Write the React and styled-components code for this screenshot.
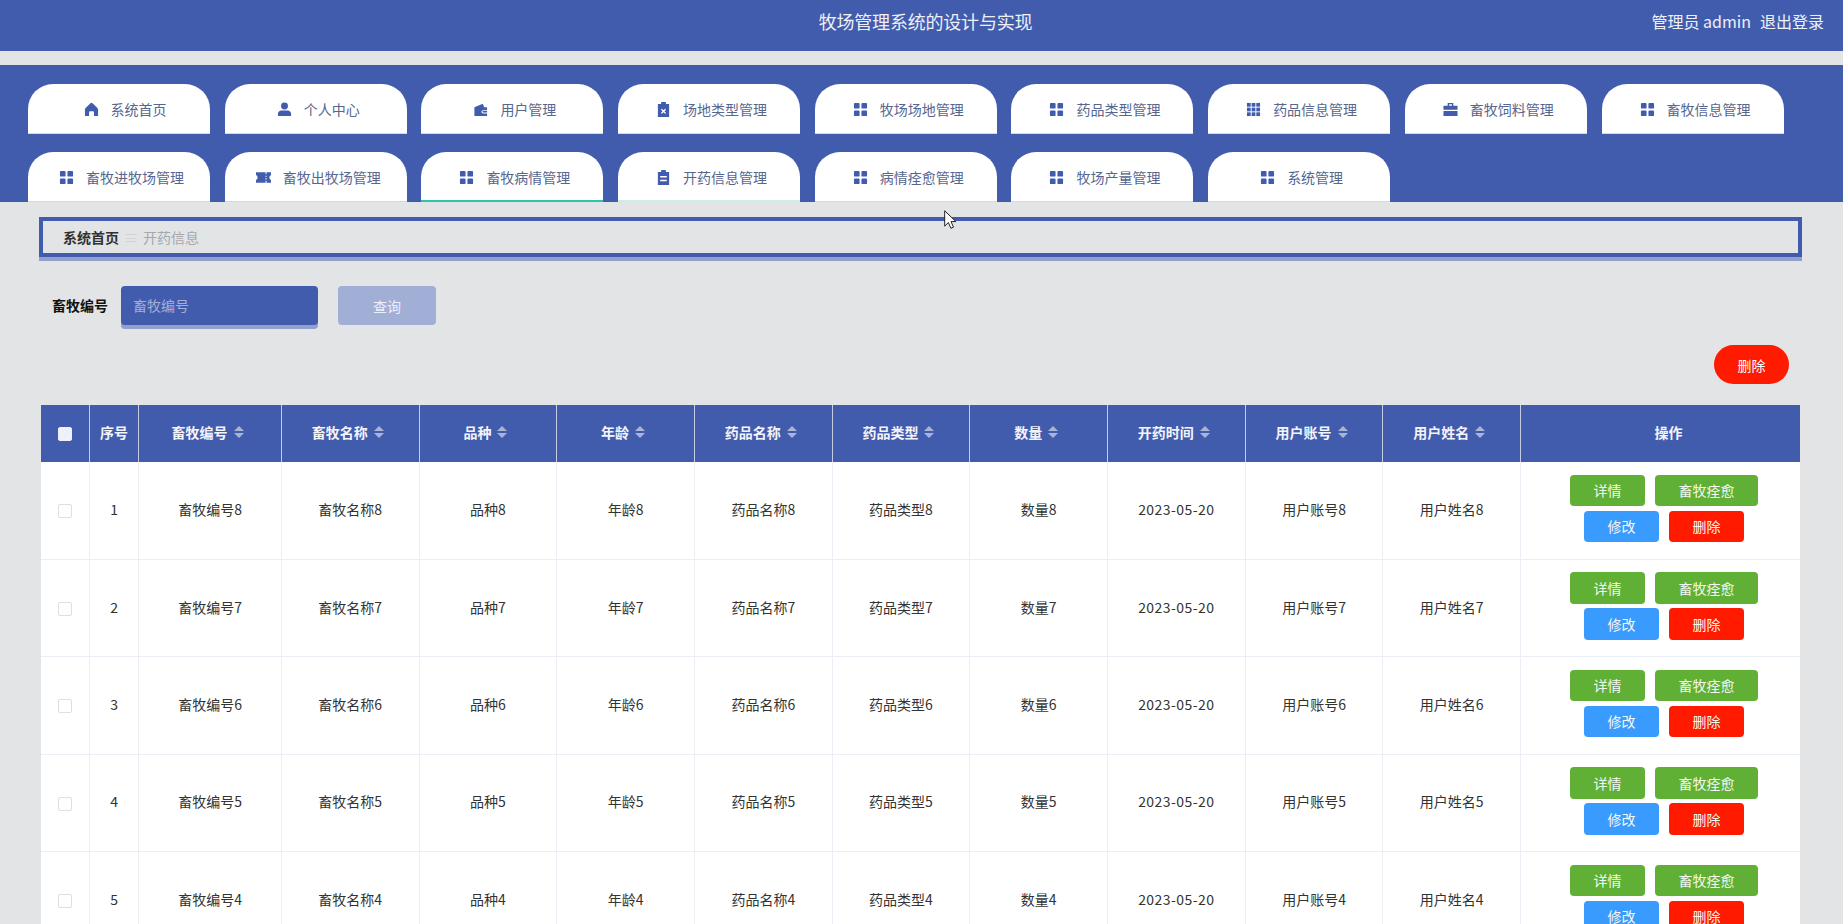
import styled, { createGlobalStyle } from 'styled-components';

const BLUE = '#425cad';
const PAGE = '#e2e4e6';

const GlobalStyle = createGlobalStyle`
  html, body {
    margin: 0;
    padding: 0;
    height: 100%;
    overflow: hidden;
    background: ${PAGE};
  }
  * {
    box-sizing: border-box;
  }
  body {
    font-family: "Noto Sans CJK SC", "Noto Sans", sans-serif;
    font-size: 14px;
    color: #333;
  }
`;

const Icons = {
  home: (
    <path d="M8 .8c.4 0 .8.2 1.100.5l5.200 5c.4.4.7.9.7 1.500V15h-4.400v-4.200c0-.6-.4-1-1-1H6.400c-.6 0-1 .4-1 1V15H1V7.800c0-.6.3-1.100.7-1.500l5.200-5C7.200 1 7.600.8 8 .8z" />
  ),
  user: (
    <>
      <circle cx="8" cy="4.300" r="3.700" />
      <path d="M1 15v-2.500C1 10.500 2.700 9 4.600 9h6.800c1.900 0 3.600 1.500 3.600 3.500V15H1z" />
    </>
  ),
  wallet: (
    <path
      fillRule="evenodd"
      d="M1.500 5.500 10.500 1.800l1.300 3.700H15v3.300h-4.300a1.700 1.700 0 0 0 0 3.400H15V15H1.500V5.500zM10.800 9.700h4.200v1.600h-4.200a.8.800 0 0 1 0-1.600z"
    />
  ),
  clipX: (
    <path
      fillRule="evenodd"
      d="M5.500 0h5v2h3.500v14H2V2h3.500V0zM6.300 7.200 5.300 8.200 7 9.900l-1.700 1.700 1 1L8 10.900l1.700 1.700 1-1L9 9.900l1.700-1.700-1-1L8 8.900 6.300 7.200z"
    />
  ),
  clip: (
    <path
      fillRule="evenodd"
      d="M5.500 0h5v2h3.500v14H2V2h3.500V0zM4.500 6.500v1.500h7V6.500h-7zm0 4v1.500h7v-1.500h-7z"
    />
  ),
  grid: (
    <>
      <rect x="1" y="1" width="6" height="6" rx="1" />
      <rect x="9" y="1" width="6" height="6" rx="1" />
      <rect x="1" y="9" width="6" height="6" rx="1" />
      <rect x="9" y="9" width="6" height="6" rx="1" />
    </>
  ),
  grid9: (
    <>
      {[1, 6, 11].flatMap((y) =>
        [1, 6, 11].map((x) => (
          <rect key={`${x}-${y}`} x={x} y={y} width="4" height="4" />
        ))
      )}
    </>
  ),
  ticket: (
    <path
      fillRule="evenodd"
      d="M0 2.500h10.200v2h1v-2H16v2.800c-1.100.5-1.700 1.500-1.700 2.700s.6 2.200 1.700 2.700v2.800h-4.800v-2h-1v2H0v-2.800c1.100-.5 1.700-1.500 1.700-2.700S1.100 5.800 0 5.300V2.500zM10.200 6v1.500h1V6h-1zm0 2.500V10h1V8.500h-1z"
    />
  ),
  case: (
    <path
      fillRule="evenodd"
      d="M5 1h6v3h4.500v4.300H.5V4H5V1zm1.500 1.400V4h3V2.400h-3zM.5 9.600h15V15H.5V9.600z"
    />
  ),
};

const navItems = [
  { name: '系统首页', icon: 'home', shift: 12 },
  { name: '个人中心', icon: 'user' },
  { name: '用户管理', icon: 'wallet' },
  { name: '场地类型管理', icon: 'clipX' },
  { name: '牧场场地管理', icon: 'grid' },
  { name: '药品类型管理', icon: 'grid' },
  { name: '药品信息管理', icon: 'grid9' },
  { name: '畜牧饲料管理', icon: 'case' },
  { name: '畜牧信息管理', icon: 'grid' },
  { name: '畜牧进牧场管理', icon: 'grid' },
  { name: '畜牧出牧场管理', icon: 'ticket' },
  { name: '畜牧病情管理', icon: 'grid', underline: '#2fc3ad' },
  { name: '开药信息管理', icon: 'clip', underline: '#c9efe8' },
  { name: '病情痊愈管理', icon: 'grid' },
  { name: '牧场产量管理', icon: 'grid' },
  { name: '系统管理', icon: 'grid' },
];

const columns = [
  { title: '畜牧编号', key: '畜牧编号', width: 142.6 },
  { title: '畜牧名称', key: '畜牧名称', width: 137.7 },
  { title: '品种', key: '品种', width: 137.7 },
  { title: '年龄', key: '年龄', width: 137.7 },
  { title: '药品名称', key: '药品名称', width: 137.7 },
  { title: '药品类型', key: '药品类型', width: 137.7 },
  { title: '数量', key: '数量', width: 137.7 },
  { title: '开药时间', key: 'date', width: 137.7 },
  { title: '用户账号', key: '用户账号', width: 137.7 },
  { title: '用户姓名', key: '用户姓名', width: 137.7 },
];

const rows = [8, 7, 6, 5, 4];

const App = () => {
  return (
    <Page>
      <GlobalStyle />
      <TopBar>
        <Title>牧场管理系统的设计与实现</Title>
        <UserBox>
          <span>管理员 admin</span>
          <span>退出登录</span>
        </UserBox>
      </TopBar>

      <Nav>
        {navItems.map((item) => (
          <Tab key={item.name} $underline={item.underline} $shift={item.shift}>
            <TabIcon viewBox="0 0 16 16">{Icons[item.icon]}</TabIcon>
            {item.name}
          </Tab>
        ))}
      </Nav>

      <Breadcrumb>
        <CrumbLink>系统首页</CrumbLink>
        <CrumbSep>≡</CrumbSep>
        <CrumbCurrent>开药信息</CrumbCurrent>
      </Breadcrumb>

      <SearchRow>
        <SearchLabel>畜牧编号</SearchLabel>
        <SearchInput placeholder="畜牧编号" />
        <SearchButton>查询</SearchButton>
      </SearchRow>

      <ToolRow>
        <PillButton>删除</PillButton>
      </ToolRow>

      <Table>
        <colgroup>
          <col style={{ width: 48.4 }} />
          <col style={{ width: 49.4 }} />
          {columns.map((col) => (
            <col key={col.key} style={{ width: col.width }} />
          ))}
          <col style={{ width: 279.3 }} />
        </colgroup>
        <thead>
          <tr>
            <Th>
              <CheckBox $head />
            </Th>
            <Th>序号</Th>
            {columns.map((col) => (
              <Th key={col.key}>
                <SortLabel>
                  {col.title}
                  <SortCaret />
                </SortLabel>
              </Th>
            ))}
            <ActionHead>操作</ActionHead>
          </tr>
        </thead>
        <tbody>
          {rows.map((n, i) => (
            <tr key={n}>
              <Td>
                <CheckBox />
              </Td>
              <Td>{i + 1}</Td>
              {columns.map((col) => (
                <Td key={col.key}>
                  {col.key === 'date' ? <DateText>2023-05-20</DateText> : `${col.key}${n}`}
                </Td>
              ))}
              <ActionCell>
                <Actions>
                  <ActionButton $color="#5fb035">详情</ActionButton>
                  <ActionButton $color="#5fb035">畜牧痊愈</ActionButton>
                  <ActionButton $color="#3a9bff">修改</ActionButton>
                  <ActionButton $color="#ff1a00">删除</ActionButton>
                </Actions>
              </ActionCell>
            </tr>
          ))}
        </tbody>
      </Table>

      <Cursor viewBox="0 0 12 19">
        <path
          d="M.7.8v15.300l3.700-3.500 2.500 5.700 2.600-1.100-2.500-5.600h4.900z"
          fill="#fff"
          stroke="#222"
          strokeWidth="1"
        />
      </Cursor>
    </Page>
  );
};

export default App;

const Page = styled.div`
  position: relative;
  height: 924px;
  overflow: hidden;
`;

const TopBar = styled.header`
  position: relative;
  display: flex;
  justify-content: flex-end;
  height: 51px;
  padding: 8px 19px 0 0;
  background: ${BLUE};
  color: #eef0f6;
`;

const Title = styled.div`
  position: absolute;
  left: 0;
  right: 0;
  top: 7px;
  padding-left: 8px;
  text-align: center;
  font-size: 18px;
  letter-spacing: -0.2px;
  line-height: 28px;
`;

const UserBox = styled.div`
  position: relative;
  display: flex;
  gap: 9px;
  font-size: 16px;
  line-height: 26px;
`;

const Nav = styled.nav`
  display: flex;
  flex-wrap: wrap;
  gap: 18px 14.7px;
  height: 137px;
  margin-top: 14px;
  padding: 19px 0 0 28px;
  background: ${BLUE};
`;

const Tab = styled.div`
  display: flex;
  align-items: center;
  justify-content: center;
  gap: 12px;
  width: 182px;
  height: 50px;
  padding-left: ${({ $shift }) => $shift || 5}px;
  border-radius: 25px 25px 0 0;
  box-shadow: ${({ $underline }) =>
    $underline ? `inset 0 -2px 0 ${$underline}` : 'inset 0 -1px 0 #d5d9e6'};
  background: #fff;
  color: #56668f;
  font-size: 14px;
`;

const TabIcon = styled.svg`
  flex: none;
  width: 15px;
  height: 15px;
  fill: ${BLUE};
`;

const Breadcrumb = styled.div`
  display: flex;
  align-items: center;
  height: 40px;
  margin: 15px 41px 0 39px;
  padding-left: 20px;
  border: 4px solid ${BLUE};
  box-shadow: 0 4px 0 rgba(66, 92, 173, 0.5);
  font-size: 14px;
`;

const CrumbLink = styled.span`
  font-weight: 700;
  color: #303133;
`;

const CrumbSep = styled.span`
  width: 24px;
  text-align: center;
  color: #cfd2d6;
`;

const CrumbCurrent = styled.span`
  color: #a5a8ad;
`;

const SearchRow = styled.div`
  display: flex;
  align-items: center;
  height: 39px;
  margin: 29px 0 0 52px;
`;

const SearchLabel = styled.label`
  width: 69px;
  padding-bottom: 2px;
  font-weight: 700;
  color: #111;
`;

const SearchInput = styled.input`
  width: 197px;
  height: 39px;
  padding: 0 12px 2px;
  border: 0;
  border-radius: 4px;
  outline: none;
  background: ${BLUE};
  box-shadow: 0 4px 0 rgba(66, 92, 173, 0.5);
  font: inherit;
  color: #fff;
  &::placeholder {
    color: #a3b0d6;
    opacity: 1;
  }
`;

const SearchButton = styled.button`
  width: 98px;
  height: 39px;
  margin-left: 20px;
  border: 0;
  border-radius: 4px;
  background: #a1aed6;
  color: #eef0f8;
  font: inherit;
`;

const ToolRow = styled.div`
  display: flex;
  justify-content: flex-end;
  margin: 20px 54px 0 0;
`;

const PillButton = styled.button`
  width: 75px;
  height: 39px;
  border: 0;
  border-radius: 20px;
  background: #ff1a00;
  color: #fff;
  font: inherit;
`;

const Table = styled.table`
  width: 1759px;
  margin: 21px 0 0 41px;
  table-layout: fixed;
  border-collapse: collapse;
  background: #fff;
`;

const Th = styled.th`
  height: 57px;
  padding: 0 0 3px;
  border-right: 1px solid #c6cde3;
  background: ${BLUE};
  color: #f2f4fa;
  font-size: 14px;
  font-weight: 700;
  text-align: center;
`;

const ActionHead = styled(Th)`
  padding-left: 16px;
  border-right: 0;
`;

const SortLabel = styled.span`
  display: inline-flex;
  align-items: center;
  gap: 6px;
  padding-right: 5px;
`;

const SortCaret = styled.i`
  display: inline-flex;
  flex-direction: column;
  gap: 2px;
  &::before,
  &::after {
    content: '';
    width: 0;
    height: 0;
    border-left: 5px solid transparent;
    border-right: 5px solid transparent;
  }
  &::before {
    border-bottom: 5px solid #a9b4d6;
  }
  &::after {
    border-top: 5px solid #a9b4d6;
  }
`;

const Td = styled.td`
  height: 97.4px;
  padding: 0 0 3px;
  border-right: 1px solid #ebeef5;
  border-bottom: 1px solid #ebeef5;
  color: #333;
  font-size: 14px;
  text-align: center;
  &:last-child {
    border-right: 0;
  }
`;

const DateText = styled.span`
  letter-spacing: 0.45px;
`;

const ActionCell = styled(Td)`
  padding: 0 3px 4px 10px;
`;

const Actions = styled.div`
  display: flex;
  flex-wrap: wrap;
  justify-content: center;
  gap: 4.5px 10px;
`;

const ActionButton = styled.button`
  height: 31.5px;
  padding: 0 23.5px;
  border: 0;
  border-radius: 4px;
  background: ${({ $color }) => $color};
  color: #f4f8f2;
  font: inherit;
  font-size: 14px;
`;

const CheckBox = styled.span`
  display: inline-block;
  width: 14px;
  height: 14px;
  vertical-align: middle;
  border-radius: 2px;
  border: 1px solid ${({ $head }) => ($head ? '#eef0fb' : '#dcdfe6')};
  background: ${({ $head }) => ($head ? '#eef0fb' : '#fff')};
`;

const Cursor = styled.svg`
  position: absolute;
  left: 944px;
  top: 210px;
  width: 12px;
  height: 19px;
`;
